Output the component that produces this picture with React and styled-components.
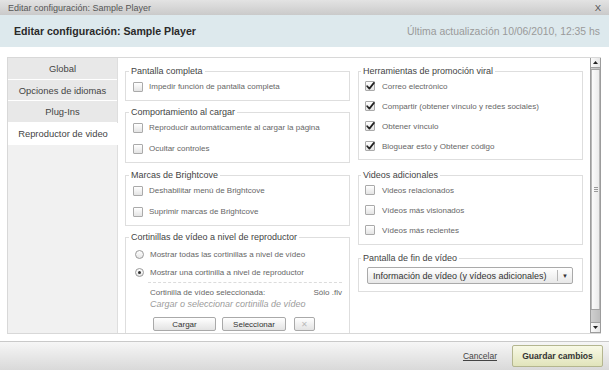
import React from "react";
import styled, { createGlobalStyle } from "styled-components";

const GlobalStyle = createGlobalStyle`
  html, body { margin: 0; padding: 0; }
  body {
    width: 609px; height: 370px; overflow: hidden; background: #fff;
    font-family: "Liberation Sans", Arial, sans-serif;
  }
  * { box-sizing: border-box; }
`;

const Dialog = styled.div`
  width: 609px; height: 370px; display: flex; flex-direction: column;
`;

const TitleBar = styled.div`
  height: 15px; flex: none; display: flex; align-items: center;
  justify-content: space-between; padding: 0 8px 0 8px;
  background: linear-gradient(#e3e3e3, #cacaca);
  color: #555; font-size: 9px;
`;

const Close = styled.span`
  font-size: 9.5px; color: #555;
`;

const Header = styled.div`
  height: 32px; flex: none; display: flex; align-items: center;
  justify-content: space-between; padding: 0 9px 0 14px;
  background: #dde9ed;
`;

const Heading = styled.h1`
  margin: 0; font-size: 10.6px; font-weight: bold; color: #2a2a2a;
`;

const Updated = styled.span`
  font-size: 10.4px; color: #9a9a9a;
`;

const Body = styled.div`
  flex: 1; display: flex; padding: 10px 8px 7px 7px; min-height: 0;
`;

const Panel = styled.div`
  flex: 1; display: flex; border: 1px solid #d8d8d8; border-right: none;
  overflow: hidden;
`;

const TabColumn = styled.nav`
  width: 110px; flex: none; display: flex; flex-direction: column;
  background: #f1f1f1; border-right: 1px solid #dedede;
`;

const Tab = styled.div`
  height: 21.7px; flex: none; display: flex; align-items: center; justify-content: center;
  font-size: 9.4px; color: #444;
  background: ${(p) => (p.$active ? "#fff" : "#e8e8e8")};
  border-bottom: 1px solid #fff;
  margin-right: ${(p) => (p.$active ? "-1px" : "0")};
`;

const Content = styled.div`
  flex: 1; display: grid; grid-template-columns: 225px 225px; column-gap: 8px;
  padding: 8px 0 0 7px; align-content: start; align-items: start; overflow: hidden;
`;

const Column = styled.div`
  display: flex; flex-direction: column;
`;

const Group = styled.fieldset`
  margin: ${(p) => p.$mt || 0}px 0 0 0;
  padding: 0 ${(p) => p.$px || 7}px ${(p) => p.$pb || 3}px;
  border: 1px solid #dedede; min-width: 0;
`;

const Legend = styled.legend`
  font-size: 9px; line-height: 10px; color: #444; padding: 0 2px; margin-left: -4px;
`;

const Option = styled.label`
  display: flex; align-items: center; height: ${(p) => p.$h || 21}px;
  gap: ${(p) => p.$gap || 6}px; font-size: 8px; color: #666;
`;

const Box = styled.span`
  width: 10px; height: 10px; flex: none; display: grid; place-items: center;
  border: 1px solid #aaa; border-radius: 1px;
  background: linear-gradient(#ffffff, #e4e4e4);
`;

const Radio = styled.span`
  width: 9px; height: 9px; flex: none; margin-left: 2px; border-radius: 50%;
  border: 1px solid #9a9a9a; display: grid; place-items: center;
  background: linear-gradient(#ffffff, #e6e6e6);
  &::after {
    content: ""; width: 3px; height: 3px; border-radius: 50%;
    background: ${(p) => (p.$on ? "#333" : "transparent")};
  }
`;

const Selected = styled.div`
  margin: 1px 0 0 15px; border-top: 1px dashed #dcdcdc; padding-top: 4px;
`;

const InfoLine = styled.div`
  display: flex; justify-content: space-between; padding-left: 2px;
  font-size: 8px; line-height: 12px; color: #666;
`;

const Hint = styled.div`
  padding-left: 2px; font-size: 9px; line-height: 11px; font-style: italic; color: #9c9c9c;
`;

const ButtonRow = styled.div`
  display: flex; gap: 6px; margin-top: 7px; padding-left: 5px;
`;

const Btn = styled.button`
  width: ${(p) => p.$w}px; height: 14px; padding: 0; margin-left: ${(p) => p.$ml || 0}px;
  border: 1px solid #a9a9a9; border-radius: 2px;
  background: linear-gradient(#ffffff, #e3e3e3);
  font-family: inherit; font-size: 8px; color: ${(p) => (p.$disabled ? "#bbb" : "#333")};
`;

const Select = styled.div`
  margin: 4px 3px 0 2px; height: 17px; display: flex;
  border: 1px solid #aaa; border-radius: 2px;
  background: linear-gradient(#ffffff, #e8e8e8);
`;

const SelectText = styled.span`
  flex: 1; display: flex; align-items: center; padding-left: 5px;
  font-size: 9px; color: #333; white-space: nowrap;
`;

const SelectArrow = styled.span`
  width: 15px; flex: none; margin: 2px 0; border-left: 1px solid #b5b5b5;
  display: grid; place-items: center; font-size: 6px; color: #333;
`;

const Scrollbar = styled.div`
  width: 11px; flex: none; display: flex; flex-direction: column;
  border: 1px solid #9c9c9c; border-top: none; background: #eeeeee;
`;

const Arrow = styled.div`
  height: 10px; flex: none; display: grid; place-items: center;
  background: linear-gradient(90deg, #fbfbfb, #e6e6e6);
  border-top: ${(p) => (p.$down ? "1px solid #a0a0a0" : "none")};
  border-bottom: ${(p) => (p.$down ? "none" : "1px solid #a0a0a0")};
`;

const Track = styled.div`
  flex: 1; display: flex; flex-direction: column;
  background: linear-gradient(90deg, #cfcfcf, #bdbdbd);
`;

const Thumb = styled.div`
  margin-top: 1px; height: 241px; display: grid; place-items: center;
  border: 1px solid #a3a3a3; border-left: none; border-right: none;
  background: linear-gradient(90deg, #fdfdfd, #e9e9e9);
  box-shadow: inset 1px 0 0 #b8b8b8, inset -1px 0 0 #b8b8b8;
`;

const Grip = styled.span`
  width: 4px; height: 5px;
  background: repeating-linear-gradient(#999 0 1px, transparent 1px 2px);
`;

const Footer = styled.div`
  height: 29px; flex: none; display: flex; align-items: center; justify-content: flex-end;
  gap: 15px; padding-right: 6px;
  border-top: 1px solid #c9c9c9;
  background: linear-gradient(#f6f6f6, #d9d9d9);
`;

const CancelLink = styled.a`
  font-size: 8.5px; color: #444; text-decoration: underline;
`;

const SaveButton = styled.button`
  width: 91px; height: 22px; padding: 0;
  border: 1px solid #b4b68f; border-radius: 2px;
  background: linear-gradient(#f8f9e6, #e1e4bb);
  font-family: inherit; font-size: 8.6px; font-weight: bold; color: #333;
`;

const Check = () => (
  <svg width="9" height="8" viewBox="0 0 9 8">
    <path d="M1.2 4.2 L3.4 6.6 L7.9 0.9" fill="none" stroke="#222" strokeWidth="1.7" strokeLinecap="round" strokeLinejoin="round" />
  </svg>
);

const Tri = ({ down }) => (
  <svg width="5" height="3" viewBox="0 0 5 3">
    <path d={down ? "M0 0 L5 0 L2.5 3 Z" : "M0 3 L5 3 L2.5 0 Z"} fill="#222" />
  </svg>
);

const CheckOption = ({ checked, label, h, gap }) => (
  <Option $h={h} $gap={gap}>
    <Box>{checked && <Check />}</Box>
    {label}
  </Option>
);

const tabs = ["Global", "Opciones de idiomas", "Plug-Ins", "Reproductor de video"];

export default function App() {
  return (
    <>
      <GlobalStyle />
      <Dialog>
        <TitleBar>
          <span>Editar configuración: Sample Player</span>
          <Close>X</Close>
        </TitleBar>
        <Header>
          <Heading>Editar configuración: Sample Player</Heading>
          <Updated>Última actualización 10/06/2010, 12:35 hs</Updated>
        </Header>
        <Body>
          <Panel>
            <TabColumn>
              {tabs.map((t, i) => (
                <Tab key={t} $active={i === 3}>{t}</Tab>
              ))}
            </TabColumn>
            <Content>
              <Column>
                <Group>
                  <Legend>Pantalla completa</Legend>
                  <CheckOption label="Impedir función de pantalla completa" />
                </Group>
                <Group $mt={6}>
                  <Legend>Comportamiento al cargar</Legend>
                  <CheckOption label="Reproducir automáticamente al cargar la página" />
                  <CheckOption label="Ocultar controles" />
                </Group>
                <Group $mt={7}>
                  <Legend>Marcas de Brightcove</Legend>
                  <CheckOption label="Deshabilitar menú de Brightcove" />
                  <CheckOption label="Suprimir marcas de Brightcove" />
                </Group>
                <Group $mt={6} $pb={10}>
                  <Legend>Cortinillas de vídeo a nivel de reproductor</Legend>
                  <div style={{ height: 3 }} />
                  <Option $h={18}>
                    <Radio />
                    Mostrar todas las cortinillas a nivel de vídeo
                  </Option>
                  <Option $h={18}>
                    <Radio $on />
                    Mostrar una cortinilla a nivel de reproductor
                  </Option>
                  <Selected>
                    <InfoLine>
                      <span>Cortinilla de vídeo seleccionada:</span>
                      <span>Sólo .flv</span>
                    </InfoLine>
                    <Hint>Cargar o seleccionar cortinilla de vídeo</Hint>
                    <ButtonRow>
                      <Btn $w={63}>Cargar</Btn>
                      <Btn $w={64}>Seleccionar</Btn>
                      <Btn $w={21} $ml={2} $disabled>✕</Btn>
                    </ButtonRow>
                  </Selected>
                </Group>
              </Column>
              <Column>
                <Group $px={6}>
                  <Legend>Herramientas de promoción viral</Legend>
                  <CheckOption checked h={20} gap={7} label="Correo electrónico" />
                  <CheckOption checked h={20} gap={7} label="Compartir (obtener vínculo y redes sociales)" />
                  <CheckOption checked h={20} gap={7} label="Obtener vínculo" />
                  <CheckOption checked h={20} gap={7} label="Bloguear esto y Obtener código" />
                </Group>
                <Group $mt={10} $px={6} $pb={4}>
                  <Legend>Videos adicionales</Legend>
                  <CheckOption h={20} gap={7} label="Videos relacionados" />
                  <CheckOption h={20} gap={7} label="Vídeos más visionados" />
                  <CheckOption h={20} gap={7} label="Vídeos más recientes" />
                </Group>
                <Group $mt={8} $px={6} $pb={7}>
                  <Legend>Pantalla de fin de vídeo</Legend>
                  <Select>
                    <SelectText>Información de vídeo (y vídeos adicionales)</SelectText>
                    <SelectArrow>▼</SelectArrow>
                  </Select>
                </Group>
              </Column>
            </Content>
            <Scrollbar>
              <Arrow><Tri /></Arrow>
              <Track>
                <Thumb><Grip /></Thumb>
              </Track>
              <Arrow $down><Tri down /></Arrow>
            </Scrollbar>
          </Panel>
        </Body>
        <Footer>
          <CancelLink href="#">Cancelar</CancelLink>
          <SaveButton>Guardar cambios</SaveButton>
        </Footer>
      </Dialog>
    </>
  );
}
